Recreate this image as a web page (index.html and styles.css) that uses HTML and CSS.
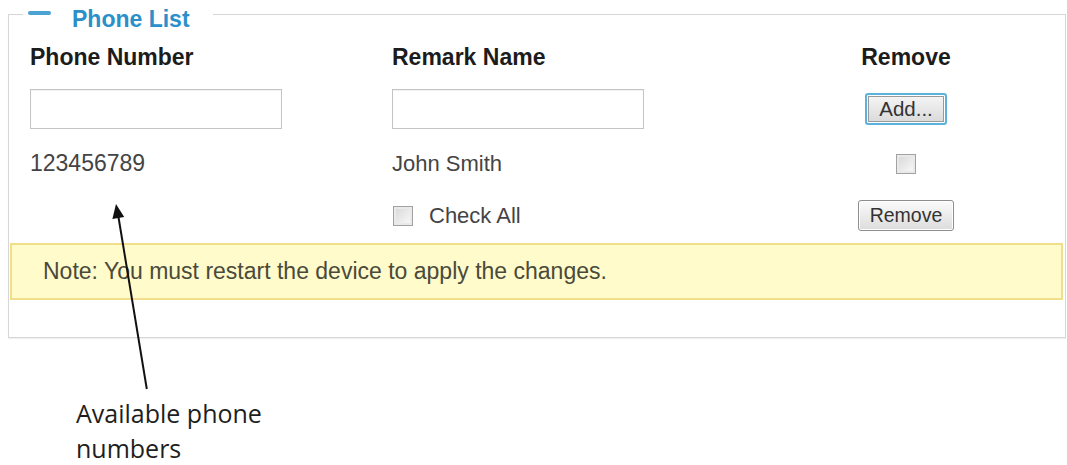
FILE: index.html
```html
<!DOCTYPE html>
<html lang="en">
<head>
  <meta charset="UTF-8">
  <meta name="viewport" content="width=device-width, initial-scale=1">
  <title>Phone List</title>
  <link rel="stylesheet" href="styles.css">
</head>
<body>
  <fieldset class="panel">
    <legend class="panel-title"><span class="collapse-dash"></span>Phone List</legend>

    <div class="phone-table">
      <div class="row head-row">
        <div>Phone Number</div>
        <div>Remark Name</div>
        <div class="col-action">Remove</div>
      </div>

      <div class="row input-row">
        <div><input type="text" class="text-field"></div>
        <div><input type="text" class="text-field"></div>
        <div class="col-action"><button class="btn btn-add">Add...</button></div>
      </div>

      <div class="row data-row">
        <div class="phone-no">123456789</div>
        <div>John Smith</div>
        <div class="col-action"><input type="checkbox" class="check"></div>
      </div>

      <div class="row tools-row">
        <div></div>
        <label class="check-all"><input type="checkbox" class="check"> Check All</label>
        <div class="col-action"><button class="btn">Remove</button></div>
      </div>
    </div>

    <div class="note">Note: You must restart the device to apply the changes.</div>
  </fieldset>

  <p class="caption">Available phone<br>numbers</p>

  <!-- callout arrow drawn over the panel -->
  <svg class="callout" width="1067" height="465" viewBox="0 0 1067 465">
    <line x1="118.3" y1="216" x2="146.8" y2="389" stroke="#111" stroke-width="2"/>
    <polygon points="116,204 112.4,219 124.2,217" fill="#111"/>
  </svg>
</body>
</html>
```

FILE: styles.css
```css
/* Base */
* {
  box-sizing: border-box;
}
body {
  margin: 0;
  background: #fff;
  font-family: "Liberation Sans", Arial, sans-serif;
  color: #333;
  position: relative;
  overflow: hidden;
}

/* Panel with legend */
.panel {
  margin: 0 1px 0 8px;
  padding: 0 0 37px;
  border: 1px solid #d6d6d6;
  box-shadow: 0 1px 1px rgba(0, 0, 0, 0.06);
  min-width: 0;
}
.panel-title {
  margin-left: 14px;
  padding: 10px 23px 0 5px;
  height: 28px;
  font-size: 23px;
  font-weight: bold;
  line-height: 18px;
  color: #2b8fca;
}
.collapse-dash {
  display: inline-block;
  width: 23px;
  height: 4px;
  margin-right: 21px;
  border-radius: 2px;
  background: #4aa3d4;
  vertical-align: 11.6px;
}

/* Table rows */
.phone-table {
  padding: 16px 0 0 21px;
}
.row {
  display: grid;
  grid-template-columns: 362px 453px 122px;
  align-items: center;
}
.col-action {
  justify-self: center;
  display: flex;
}
.head-row {
  height: 27px;
  font-size: 23px;
  font-weight: bold;
  color: #1c1c1c;
}
.input-row {
  margin-top: 18px;
  height: 40px;
}
.data-row {
  margin-top: 21px;
  height: 26px;
  font-size: 22px;
  color: #444;
}
.phone-no {
  font-size: 23px;
}
.tools-row {
  margin-top: 24px;
  height: 31px;
  font-size: 22px;
  color: #444;
}

/* Form controls */
.text-field {
  display: block;
  width: 252px;
  height: 40px;
  margin: 0;
  border: 1px solid #c4c4c4;
  box-shadow: inset 0 1px 1px rgba(0, 0, 0, 0.06);
  background: #fff;
}
.check {
  appearance: none;
  width: 20px;
  height: 20px;
  margin: 0;
  border: 1px solid #a2a2a2;
  box-shadow: inset 0 0 0 2px #e9e9e9;
  background: linear-gradient(135deg, #d6d6d6, #fbfbfb);
}
.check-all {
  display: flex;
  align-items: center;
  gap: 16px;
  padding-left: 1px;
}
.btn {
  height: 31px;
  padding: 0 11px;
  font-family: "Liberation Sans", Arial, sans-serif;
  font-size: 19.5px;
  color: #333;
  border: 1px solid #8d8d8d;
  border-radius: 3px;
  background: linear-gradient(#fbfbfb, #dcdcdc);
  box-shadow: inset 0 0 0 1px #fff;
}
.btn-add {
  width: 82px;
  height: 32px;
  padding: 0;
  font-size: 20.5px;
  border: 2px solid #5bb2dc;
  box-shadow: inset 0 0 0 1px #fff, inset 0 0 0 2px #9a9a9a;
  background: linear-gradient(#f6f6f6, #d9d9d9);
}

/* Note bar */
.note {
  display: flex;
  align-items: center;
  height: 57px;
  margin: 12px 2px 0 1px;
  padding-left: 31px;
  font-size: 23px;
  color: #4a4a3a;
  background: #fffbcb;
  border: 2px solid #f1de8a;
}

/* Annotation below the panel */
.caption {
  margin: 58px 0 0 76px;
  font-family: "Open Sans", sans-serif;
  font-size: 25px;
  line-height: 35px;
  color: #1e1e1e;
}
.callout {
  position: absolute;
  top: 0;
  left: 0;
  pointer-events: none;
}
```
